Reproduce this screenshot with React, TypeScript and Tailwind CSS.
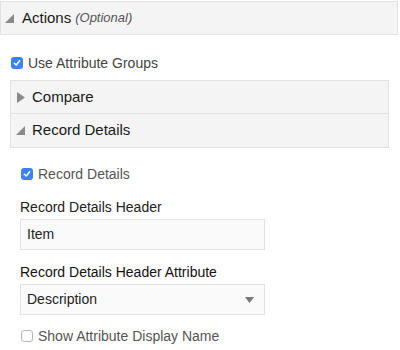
import React from 'react'

const font = { fontFamily: '"Liberation Sans", Arial, sans-serif' }

// small corner triangle used for expanded sections
function OpenTri() {
  return (
    <svg width="9" height="9" viewBox="0 0 9 9" className="shrink-0">
      <polygon points="9,0 9,9 0,9" fill="#8a8a8a" />
    </svg>
  )
}

function ClosedTri() {
  return (
    <svg width="8" height="11" viewBox="0 0 8 11" className="shrink-0">
      <polygon points="0,0 8,5.5 0,11" fill="#8a8a8a" />
    </svg>
  )
}

function Check({ checked }: { checked: boolean }) {
  if (!checked) {
    return <span className="w-[12px] h-[12px] rounded-[3px] border border-[#b5b5b5] bg-white shrink-0" />
  }
  return (
    <span className="w-[12px] h-[12px] rounded-[3px] bg-[#3b82f6] flex items-center justify-center shrink-0">
      <svg width="8" height="8" viewBox="0 0 8 8">
        <path d="M1.3 4.2 L3.2 6 L6.7 1.8" stroke="white" strokeWidth="1.5" fill="none" strokeLinecap="round" strokeLinejoin="round" />
      </svg>
    </span>
  )
}

export default function App() {
  return (
    <div className="w-[400px] h-[350px] bg-white overflow-hidden text-[#222]" style={font}>
      {/* Actions header */}
      <div className="mt-[1px] w-[398px] h-[34px] bg-[#f4f4f4] border border-[#e2e2e2] flex items-center pl-[4px] gap-[8px]">
        <OpenTri />
        <span className="text-[15px] text-[#1a1a1a]">Actions</span>
        <span className="text-[13px] italic text-[#555] -ml-[4px]">(Optional)</span>
      </div>

      {/* Use Attribute Groups */}
      <div className="flex items-center gap-[5px] pl-[11px] mt-[21px] h-[14px]">
        <Check checked />
        <span className="text-[14px] text-[#444]">Use Attribute Groups</span>
      </div>

      {/* Compare / Record Details sections */}
      <div className="ml-[10px] mt-[10px] w-[379px] border border-[#e2e2e2] bg-[#f4f4f4]">
        <div className="h-[33px] flex items-center pl-[6px] gap-[7px] border-b border-[#e2e2e2]">
          <ClosedTri />
          <span className="text-[15px] text-[#1a1a1a]">Compare</span>
        </div>
        <div className="h-[33px] flex items-center pl-[5px] gap-[7px]">
          <OpenTri />
          <span className="text-[15px] text-[#1a1a1a]">Record Details</span>
        </div>
      </div>

      {/* Record Details body */}
      <div className="pl-[21px] pt-[19px]">
        <div className="flex items-center gap-[5px] h-[14px]">
          <Check checked />
          <span className="text-[14px] text-[#555]">Record Details</span>
        </div>

        <div className="mt-[18px] text-[14px] text-[#222] leading-[16px] -ml-[1px]">Record Details Header</div>
        <div className="mt-[4px] -ml-[1px] w-[245px] h-[31px] border border-[#e2e2e2] bg-[#fafafa] flex items-center pl-[6px] text-[14px] text-[#222]">
          Item
        </div>

        <div className="mt-[14px] text-[14px] text-[#111] leading-[16px] -ml-[1px]">Record Details Header Attribute</div>
        <div className="mt-[4px] -ml-[1px] w-[245px] h-[31px] border border-[#e2e2e2] bg-[#fafafa] flex items-center justify-between pl-[6px] pr-[10px] text-[14px] text-[#222]">
          <span>Description</span>
          <svg width="9" height="6" viewBox="0 0 9 6">
            <polygon points="0,0 9,0 4.5,6" fill="#777" />
          </svg>
        </div>

        <div className="mt-[14px] flex items-center gap-[5px] h-[14px]">
          <Check checked={false} />
          <span className="text-[14px] text-[#555]">Show Attribute Display Name</span>
        </div>
      </div>
    </div>
  )
}
